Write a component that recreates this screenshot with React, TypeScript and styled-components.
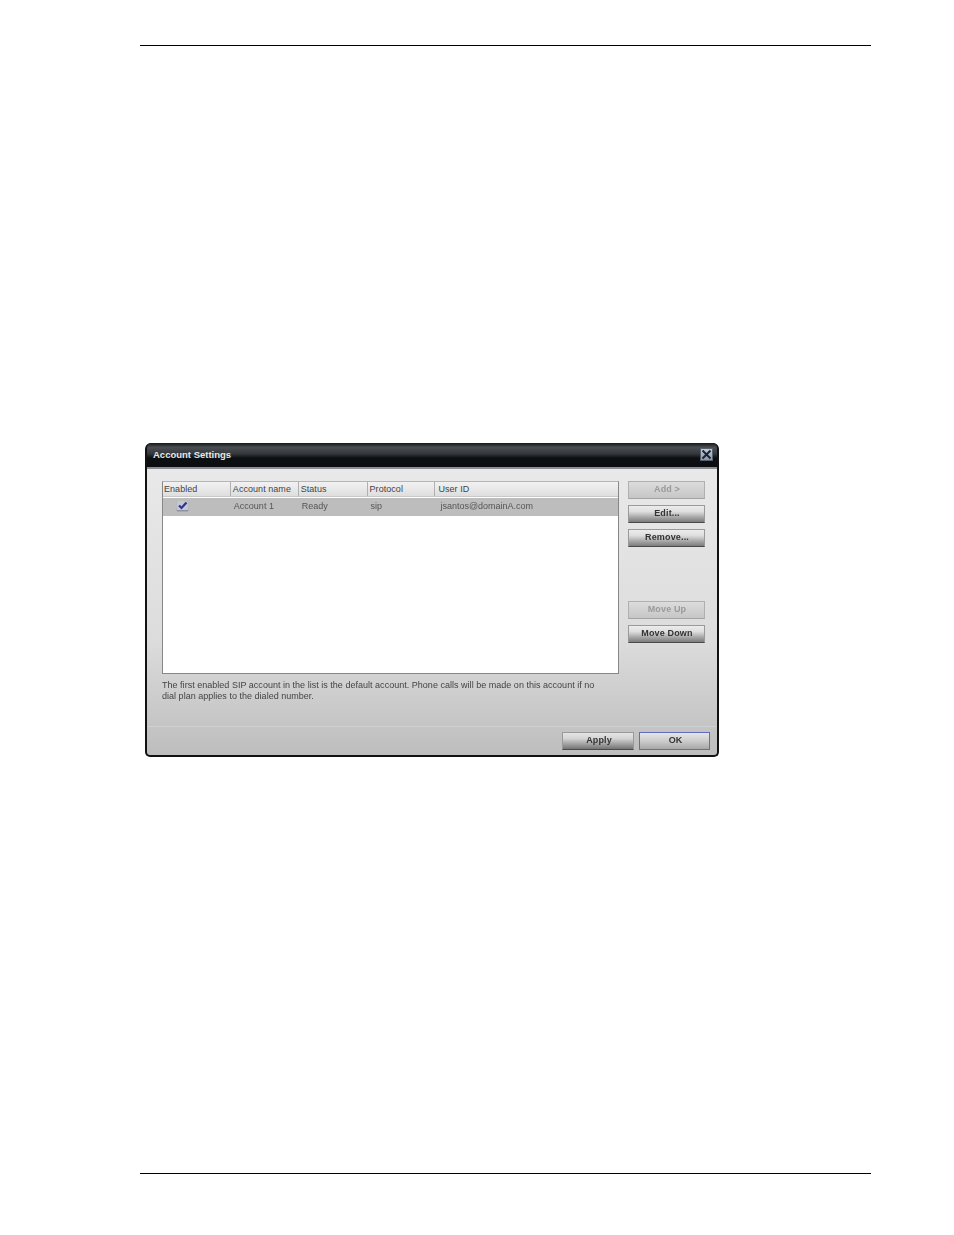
import styled, {createGlobalStyle} from 'styled-components';

const GlobalStyle = createGlobalStyle`
  html, body {
    margin: 0;
    padding: 0;
    background: #fff;
  }
`;

const columns = [
  {label: 'Enabled', width: 68},
  {label: 'Account name', width: 68},
  {label: 'Status', width: 69},
  {label: 'Protocol', width: 68},
  {label: 'User ID', width: 183},
];

export default function App() {
  return (
    <Page>
      <GlobalStyle />
      <Rule />
      <Dialog>
        <TitleBar>
          <Title>Account Settings</Title>
          <CloseButton>
            <svg width="11" height="11" viewBox="0 0 11 11">
              <path d="M1.5 1.5 L9.5 9.5 M9.5 1.5 L1.5 9.5" stroke="#1c2433" strokeWidth="2" />
            </svg>
          </CloseButton>
        </TitleBar>
        <TitleEdge />
        <Body>
          <Main>
            <Left>
              <List>
                <HeaderRow>
                  {columns.map(col => (
                    <HeaderCell key={col.label} $width={col.width}>
                      {col.label}
                    </HeaderCell>
                  ))}
                </HeaderRow>
                <Row>
                  <Cell $width={68}>
                    <CheckIcon>
                      <svg width="13" height="12" viewBox="0 0 13 12">
                        <rect x="0.5" y="1" width="12" height="10.5" rx="1.5" fill="#8f92a2" />
                        <rect x="0.5" y="1" width="12" height="9" rx="1.5" fill="#c4c7d4" />
                        <path d="M3 5.5 L5.5 8 L10.5 2.5" stroke="#33338f" strokeWidth="2.2" fill="none" />
                      </svg>
                    </CheckIcon>
                  </Cell>
                  <Cell $width={68}>Account 1</Cell>
                  <Cell $width={69}>Ready</Cell>
                  <Cell $width={68}>sip</Cell>
                  <Cell $width={183} $pad={5}>jsantos@domainA.com</Cell>
                </Row>
              </List>
              <Note>
                The first enabled SIP account in the list is the default account. Phone calls will be made on this
                account if no dial plan applies to the dialed number.
              </Note>
            </Left>
            <Side>
              <SideButton $disabled>Add &gt;</SideButton>
              <SideButton>Edit...</SideButton>
              <SideButton>Remove...</SideButton>
              <SideGap />
              <SideButton $disabled>Move Up</SideButton>
              <SideButton>Move Down</SideButton>
            </Side>
          </Main>
          <Footer>
            <FooterButton>Apply</FooterButton>
            <FooterButton $primary>OK</FooterButton>
          </Footer>
        </Body>
      </Dialog>
      <BottomRule />
    </Page>
  );
}

const Page = styled.div`
  box-sizing: border-box;
  width: 954px;
  height: 1235px;
  padding: 45px 83px 0 140px;
  font-family: 'Liberation Sans', Arial, sans-serif;
  overflow: hidden;
`;

const Rule = styled.div`
  height: 1px;
  background: #000;
`;

const BottomRule = styled(Rule)`
  margin-top: 416px;
`;

const Dialog = styled.div`
  box-sizing: border-box;
  display: flex;
  flex-direction: column;
  width: 574px;
  height: 314px;
  margin: 397px 0 0 5px;
  background: #15181c;
  border: solid #111;
  border-width: 0 2px 2px 2px;
  border-radius: 6px 6px 5px 5px;
  overflow: hidden;
  filter: blur(0.3px);
`;

const TitleBar = styled.div`
  flex: none;
  display: flex;
  align-items: center;
  justify-content: space-between;
  height: 23px;
  padding: 0 4px 1px 6px;
  background: linear-gradient(#15181b 0%, #4a4e52 18%, #34383b 45%, #0d1013 62%, #0b0d10 100%);
`;

const Title = styled.span`
  color: #e6e8e8;
  font-size: 9.5px;
  font-weight: bold;
`;

const CloseButton = styled.span`
  display: flex;
  align-items: center;
  justify-content: center;
  width: 13px;
  height: 13px;
  background: linear-gradient(#c3ccd8, #8d99a8);
  border: 1px solid #56606c;
  box-sizing: border-box;
`;

const TitleEdge = styled.div`
  flex: none;
  height: 2px;
  background: #8a9096;
`;

const Body = styled.div`
  flex: 1;
  display: flex;
  flex-direction: column;
  min-height: 0;
  background: linear-gradient(#e9e9e9 0%, #dcdcdc 60%, #bdbdbd 100%);
`;

const Main = styled.div`
  flex: 1;
  display: flex;
  gap: 9px;
  padding: 12px 12px 0 15px;
  min-height: 0;
`;

const Left = styled.div`
  display: flex;
  flex-direction: column;
  width: 457px;
`;

const List = styled.div`
  box-sizing: border-box;
  height: 193px;
  background: #fff;
  border: 1px solid #85888a;
  border-top-color: #b5b5b5;
`;

const HeaderRow = styled.div`
  display: flex;
  height: 14px;
  background: linear-gradient(#f2f2f2, #dedede);
  border-bottom: 1px solid #c8c8c8;
`;

const HeaderCell = styled.div<{$width: number}>`
  box-sizing: border-box;
  width: ${p => p.$width}px;
  padding-left: 1px;
  border-right: 1px solid #b0b0b0;
  color: #444;
  font-size: 9px;
  line-height: 14px;
  letter-spacing: 0.05px;
  white-space: nowrap;

  &:nth-child(n + 2) {
    padding-left: 2px;
  }

  &:last-child {
    border-right: none;
    padding-left: 3px;
  }
`;

const Row = styled.div`
  display: flex;
  height: 18px;
  margin-top: 1px;
  background: #bdbdbd;
`;

const Cell = styled.div<{$width: number; $pad?: number}>`
  box-sizing: border-box;
  display: flex;
  align-items: center;
  width: ${p => p.$width}px;
  padding: 0 0 2px ${p => p.$pad ?? 3}px;
  color: #555;
  font-size: 9px;
  white-space: nowrap;
`;

const CheckIcon = styled.span`
  display: flex;
  margin-left: 10px;
`;

const Note = styled.p`
  width: 445px;
  margin: 6px 0 0;
  color: #444;
  font-size: 9px;
  line-height: 11px;
  letter-spacing: 0.02px;
`;

const Side = styled.div`
  display: flex;
  flex-direction: column;
  gap: 6px;
  width: 78px;
`;

const SideGap = styled.div`
  height: 42px;
`;

const SideButton = styled.div<{$disabled?: boolean}>`
  box-sizing: border-box;
  height: 18px;
  padding-left: 1px;
  border: 1px solid ${p => (p.$disabled ? '#b0b0b0' : '#9a9a9a')};
  border-bottom-color: ${p => (p.$disabled ? '#a4a4a4' : '#4a4a4a')};
  background: ${p =>
    p.$disabled
      ? 'linear-gradient(#dcdcdc, #c6c6c6)'
      : 'linear-gradient(#ececec 0%, #dedede 35%, #a4a4a4 72%, #7c7c7c 100%)'};
  color: ${p => (p.$disabled ? '#9a9a9a' : '#333')};
  font-size: 9px;
  font-weight: bold;
  line-height: 15px;
  letter-spacing: 0.15px;
  text-align: center;
`;

const Footer = styled.div`
  flex: none;
  display: flex;
  justify-content: flex-end;
  gap: 5px;
  height: 29px;
  padding: 5px 7px 0 0;
  box-sizing: border-box;
  border-top: 1px solid #d0d0d0;
`;

const FooterButton = styled.div<{$primary?: boolean}>`
  box-sizing: border-box;
  width: ${p => (p.$primary ? 71 : 72)}px;
  height: 18px;
  padding-left: 2px;
  border: 1px solid ${p => (p.$primary ? '#5f6cc0' : '#9a9a9a')};
  border-bottom-color: ${p => (p.$primary ? '#5f6cc0' : '#4a4a4a')};
  background: ${p =>
    p.$primary
      ? 'linear-gradient(#e6e6e6 0%, #cfcfcf 45%, #a8a8a8 100%)'
      : 'linear-gradient(#e4e4e4 0%, #d4d4d4 35%, #989898 75%, #747474 100%)'};
  color: #333;
  font-size: 9px;
  font-weight: bold;
  line-height: 15px;
  letter-spacing: 0.1px;
  text-align: center;
`;
